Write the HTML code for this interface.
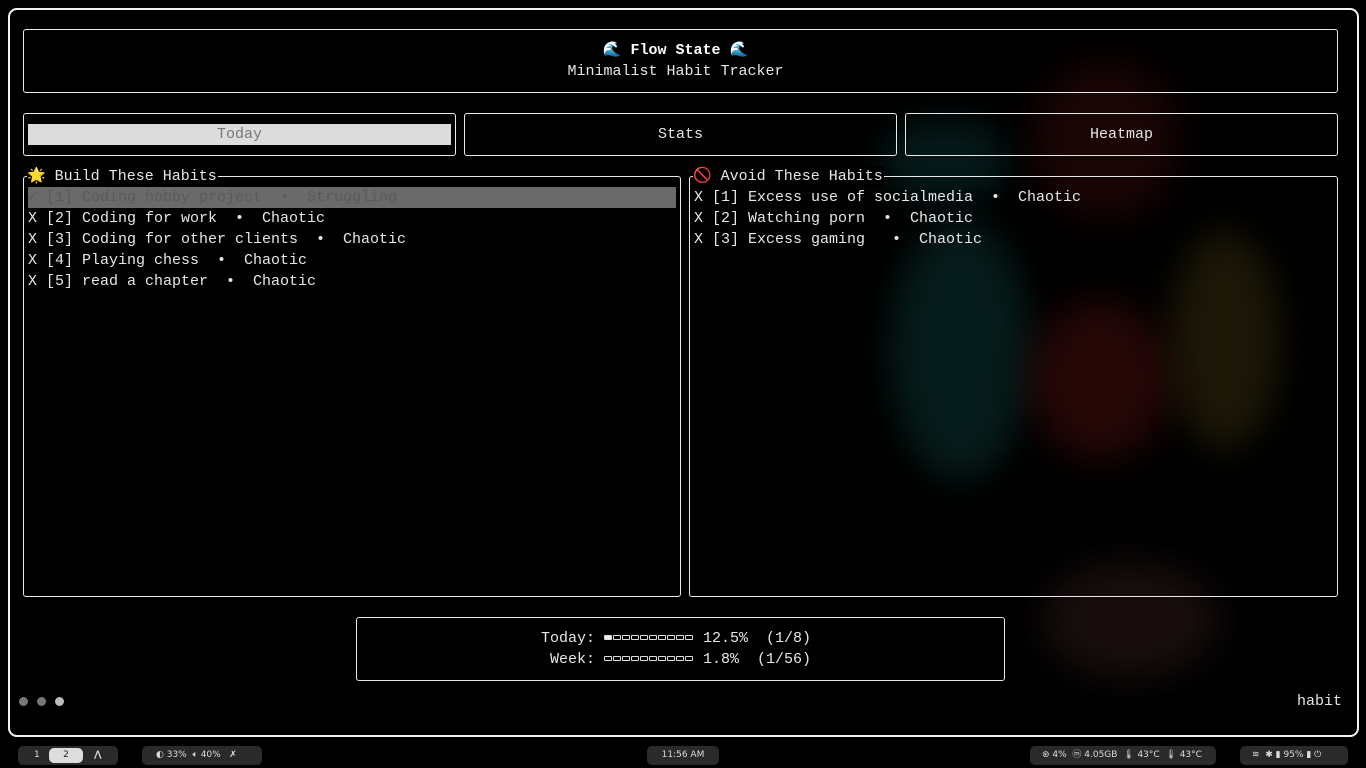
<!DOCTYPE html>
<html><head><meta charset="utf-8"><style>
*{margin:0;padding:0;box-sizing:border-box}
body{width:1366px;height:768px;background:#000;overflow:hidden;position:relative;font-family:"Liberation Mono","DejaVu Sans Mono",monospace;font-size:15px;color:#e6e6e6}
.abs{position:absolute}
.box{position:absolute;border:1px solid #e8e8e8;border-radius:3px}
.line{position:absolute;white-space:pre;line-height:21px;height:21px}
.blob{position:absolute;border-radius:50%;filter:blur(18px)}
.bar{display:inline-block;vertical-align:middle;margin-top:-3px}
.bar i{display:inline-block;width:8px;height:5px;border:1px solid #ddd;border-radius:1px;margin-right:1px}
.bar i.f{background:#eee}
.pill{position:absolute;top:746px;height:19px;background:#2a2a2a;border-radius:5px;font-family:"DejaVu Sans",sans-serif;font-size:9px;color:#ddd;line-height:19px;white-space:pre}
</style></head><body>
<div class="blob" style="left:880px;top:120px;width:130px;height:80px;background:#0d3a3a;opacity:.45"></div>
<div class="blob" style="left:890px;top:220px;width:140px;height:260px;background:#0e3f3c;opacity:.45"></div>
<div class="blob" style="left:1030px;top:60px;width:150px;height:160px;background:#3a0c0c;opacity:.45"></div>
<div class="blob" style="left:1030px;top:300px;width:140px;height:160px;background:#4a0d0d;opacity:.5"></div>
<div class="blob" style="left:1170px;top:230px;width:110px;height:220px;background:#3f3410;opacity:.45"></div>
<div class="blob" style="left:1040px;top:560px;width:180px;height:120px;background:#3a2020;opacity:.4"></div>

<div class="box" style="left:8px;top:8px;width:1351px;height:729px;border:2px solid #f2f2f2;border-radius:9px"></div>

<div class="box" style="left:23px;top:29px;width:1315px;height:64px"></div>
<div class="line" style="left:18px;width:1315px;top:40px;text-align:center;font-weight:bold;color:#fff">🌊 Flow State 🌊</div>
<div class="line" style="left:18px;width:1315px;top:61px;text-align:center">Minimalist Habit Tracker</div>

<div class="box" style="left:23px;top:113px;width:433px;height:43px"></div>
<div class="abs" style="left:28px;top:124px;width:423px;height:21px;background:#dcdcdc"></div>
<div class="line" style="left:23px;width:433px;top:124px;text-align:center;color:#777">Today</div>
<div class="box" style="left:464px;top:113px;width:433px;height:43px"></div>
<div class="line" style="left:464px;width:433px;top:124px;text-align:center">Stats</div>
<div class="box" style="left:905px;top:113px;width:433px;height:43px"></div>
<div class="line" style="left:905px;width:433px;top:124px;text-align:center">Heatmap</div>

<div class="box" style="left:23px;top:176px;width:658px;height:421px"></div>
<div class="line" style="left:27px;top:166px;background:#000;padding-right:1px">🌟 Build These Habits</div>
<div class="abs" style="left:28px;top:187px;width:648px;height:21px;background:#6a6a6a"></div>
<div class="line" style="left:28px;top:187px;color:#5a5a5a">✓ [1] Coding hobby project  •  Struggling</div>
<div class="line" style="left:28px;top:208px">X [2] Coding for work  •  Chaotic</div>
<div class="line" style="left:28px;top:229px">X [3] Coding for other clients  •  Chaotic</div>
<div class="line" style="left:28px;top:250px">X [4] Playing chess  •  Chaotic</div>
<div class="line" style="left:28px;top:271px">X [5] read a chapter  •  Chaotic</div>

<div class="box" style="left:689px;top:176px;width:649px;height:421px"></div>
<div class="line" style="left:693px;top:166px;background:#000;padding-right:1px">🚫 Avoid These Habits</div>
<div class="line" style="left:694px;top:187px">X [1] Excess use of socialmedia  •  Chaotic</div>
<div class="line" style="left:694px;top:208px">X [2] Watching porn  •  Chaotic</div>
<div class="line" style="left:694px;top:229px">X [3] Excess gaming   •  Chaotic</div>

<div class="box" style="left:356px;top:617px;width:649px;height:64px;background:#000"></div>
<div class="line" style="left:541px;top:628px">Today: <span class="bar"><i class="f"></i><i></i><i></i><i></i><i></i><i></i><i></i><i></i><i></i><i></i></span> 12.5%  (1/8)</div>
<div class="line" style="left:550px;top:649px">Week: <span class="bar"><i></i><i></i><i></i><i></i><i></i><i></i><i></i><i></i><i></i><i></i></span> 1.8%  (1/56)</div>

<div class="abs" style="left:19px;top:697px;width:9px;height:9px;border-radius:50%;background:#777"></div>
<div class="abs" style="left:37px;top:697px;width:9px;height:9px;border-radius:50%;background:#777"></div>
<div class="abs" style="left:55px;top:697px;width:9px;height:9px;border-radius:50%;background:#bbb"></div>
<div class="line" style="left:1297px;top:691px">habit</div>

<div class="pill" style="left:18px;width:100px"><span style="position:absolute;left:16px">1</span><span style="position:absolute;left:31px;top:2px;width:34px;height:15px;line-height:15px;background:#ddd;color:#222;border-radius:5px;text-align:center">2</span><span style="position:absolute;left:76px;font-weight:bold">⋀</span></div>
<div class="pill" style="left:142px;width:120px;padding-left:14px">◐ 33%  🔈︎ 40%   ✗</div>
<div class="pill" style="left:647px;width:72px;text-align:center">11:56 AM</div>
<div class="pill" style="left:1030px;width:186px;padding-left:12px">⊛ 4%  ⓜ 4.05GB  🌡︎ 43°C  🌡︎ 43°C</div>
<div class="pill" style="left:1240px;width:108px;padding-left:12px">≋  ✱ ▮ 95% ▮ ⏻</div>
</body></html>
